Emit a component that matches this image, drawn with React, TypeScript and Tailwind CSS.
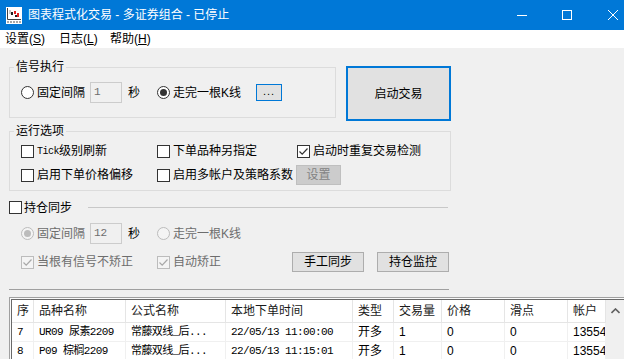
import React from "react";

const ui = "font-['Liberation_Sans','Noto_Sans_CJK_SC',sans-serif]";
const mono = "font-['Liberation_Mono','Noto_Sans_CJK_SC',monospace]";

function Radio({ checked = false, disabled = false }: { checked?: boolean; disabled?: boolean }) {
  return (
    <span
      className={
        disabled
          ? "w-[13px] h-[13px] shrink-0 rounded-full border border-[#bcbcbc] bg-[#f4f4f4] flex items-center justify-center"
          : "w-[13px] h-[13px] shrink-0 rounded-full border border-[#333333] bg-white flex items-center justify-center"
      }
    >
      {checked && (
        <span className={disabled ? "w-[7px] h-[7px] rounded-full bg-[#bcbcbc]" : "w-[7px] h-[7px] rounded-full bg-[#333333]"} />
      )}
    </span>
  );
}

function Check({ checked = false, disabled = false }: { checked?: boolean; disabled?: boolean }) {
  return (
    <span
      className={
        disabled
          ? "w-[13px] h-[13px] shrink-0 border border-[#bcbcbc] bg-[#f4f4f4] flex items-center justify-center"
          : "w-[13px] h-[13px] shrink-0 border border-[#333333] bg-white flex items-center justify-center"
      }
    >
      {checked && (
        <svg width="11" height="11" viewBox="0 0 11 11">
          <path d="M1.5 5.5 L4.2 8.2 L9.5 2.5" fill="none" stroke={disabled ? "#a8a8a8" : "#333333"} strokeWidth="1.2" />
        </svg>
      )}
    </span>
  );
}

function Btn({ children, className = "" }: { children: React.ReactNode; className?: string }) {
  return (
    <span className={`flex items-center justify-center bg-[#e1e1e1] border border-[#adadad] text-[12px] text-black ${className}`}>
      {children}
    </span>
  );
}

const headers = ["序", "品种名称", "公式名称", "本地下单时间", "类型", "交易量", "价格", "滑点", "帐户"];
const rows = [
  ["7", "UR09 尿素2209", "常藤双线_后...", "22/05/13 11:00:00", "开多", "1", "0", "0", "13554900"],
  ["8", "P09 棕榈2209", "常藤双线_后...", "22/05/13 11:15:01", "开多", "1", "0", "0", "13554900"],
];

function AppIcon() {
  return (
    <svg width="16" height="17" viewBox="0 0 16 17">
      <rect width="16" height="17" fill="#ffffff" />
      <path d="M1.5 1 V12.5 H15" fill="none" stroke="#404040" strokeWidth="1" />
      <path d="M3 4 H5 M3 6 H5" stroke="#9a9a9a" strokeWidth="1" />
      <rect x="5" y="5" width="2" height="3" fill="#202020" />
      <rect x="8" y="4" width="2" height="3" fill="#e02020" />
      <rect x="11" y="6" width="2" height="4" fill="#e02020" />
      <rect x="9" y="8" width="2" height="2" fill="#202020" />
      <path d="M1 15 H15" stroke="#8a8a8a" strokeWidth="1.5" strokeDasharray="2 1" />
    </svg>
  );
}

export default function App() {
  return (
    <div className={`w-[624px] h-[359px] overflow-hidden bg-[#f0f0f0] text-[12px] text-black ${ui}`}>
      {/* title bar */}
      <div className="h-[30px] bg-[#0078d7] flex items-center">
        <span className="ml-[6px]">
          <AppIcon />
        </span>
        <span className="ml-[6px] text-white text-[12px] leading-[14px]">图表程式化交易 - 多证券组合 - 已停止</span>
        <div className="ml-auto mr-[6px] flex items-center gap-[35px]">
          <svg width="10" height="10" viewBox="0 0 10 10">
            <path d="M0 5.5 H10" stroke="#ffffff" strokeWidth="1" />
          </svg>
          <svg width="10" height="10" viewBox="0 0 10 10">
            <rect x="0.5" y="0.5" width="9" height="9" fill="none" stroke="#ffffff" strokeWidth="1" />
          </svg>
          <svg width="10" height="10" viewBox="0 0 10 10" className="ml-px">
            <path d="M0 0 L10 10 M10 0 L0 10" stroke="#ffffff" strokeWidth="1" />
          </svg>
        </div>
      </div>

      {/* menu bar */}
      <div className="h-[18px] bg-white flex items-center pl-[5px] leading-[14px]">
        <span className="w-[54px]">设置(<u>S</u>)</span>
        <span className="w-[51px]">日志(<u>L</u>)</span>
        <span>帮助(<u>H</u>)</span>
      </div>

      <div className="px-[9px]">
        {/* signal group + start button */}
        <div className="flex items-start mt-[12px]">
          <fieldset className="w-[327px] border border-[#dcdcdc]">
            <legend className="ml-[4px] px-[2px] leading-[14px]">信号执行</legend>
            <div className="pl-[11px] mt-[8px] mb-[14px] h-[21px] flex items-center">
              <Radio />
              <span className="ml-[3px] w-[53px]">固定间隔</span>
              <span className={`w-[32px] h-[21px] border border-[#cccccc] bg-[#f0f0f0] text-[#6d6d6d] pl-[3px] text-[11px] leading-[19px] ${mono}`}>1</span>
              <span className="ml-[6px] w-[29px]">秒</span>
              <Radio checked />
              <span className="ml-[3px] w-[83px]">走完一根K线</span>
              <span className="w-[26px] h-[17px] border border-[#0078d7] bg-[#e1e1e1] flex items-center justify-center text-[11px] tracking-[1px] leading-none pb-[3px]">...</span>
            </div>
          </fieldset>
          <span className="ml-[10px] mt-[6px] w-[105px] h-[55px] border-2 border-[#0078d7] bg-[#e1e1e1] flex items-center justify-center">
            启动交易
          </span>
        </div>

        {/* options group */}
        <fieldset className="mt-[3px] w-[442px] border border-[#dcdcdc]">
          <legend className="ml-[4px] px-[2px] leading-[14px]">运行选项</legend>
          <div className="pl-[11px] pt-[6px] pb-[5px]">
            <div className="h-[14px] flex items-center">
              <span className="w-[136px] flex items-center">
                <Check />
                <span className={`ml-[3px] text-[10px] tracking-[-0.5px] ${mono}`}>Tick</span>
                <span>级别刷新</span>
              </span>
              <span className="w-[140px] flex items-center">
                <Check />
                <span className="ml-[3px]">下单品种另指定</span>
              </span>
              <span className="flex items-center">
                <Check checked />
                <span className="ml-[3px]">启动时重复交易检测</span>
              </span>
            </div>
            <div className="mt-[7px] h-[20px] flex items-center">
              <span className="w-[136px] flex items-center">
                <Check />
                <span className="ml-[3px]">启用下单价格偏移</span>
              </span>
              <span className="w-[139px] flex items-center">
                <Check />
                <span className="ml-[3px] whitespace-nowrap">启用多帐户及策略系数</span>
              </span>
              <span className="w-[45px] h-[20px] bg-[#cccccc] border border-[#bfbfbf] text-[#838383] flex items-center justify-center">
                设置
              </span>
            </div>
          </div>
        </fieldset>

        {/* position sync */}
        <div className="mt-[9px] h-[15px] flex items-center">
          <Check />
          <span className="ml-[2px] w-[48px]">持仓同步</span>
          <span className="ml-[16px] w-[360px] h-px bg-[#c8c8c8]" />
        </div>
        <div className="mt-[8px] h-[21px] pl-[12px] flex items-center text-[#6d6d6d]">
          <Radio checked disabled />
          <span className="ml-[3px] w-[53px]">固定间隔</span>
          <span className={`w-[32px] h-[21px] border border-[#cccccc] bg-[#f0f0f0] text-[#6d6d6d] pl-[3px] text-[11px] leading-[19px] ${mono}`}>12</span>
          <span className="ml-[6px] w-[29px] text-black">秒</span>
          <Radio disabled />
          <span className="ml-[3px]">走完一根K线</span>
        </div>
        <div className="mt-[8px] h-[20px] pl-[12px] flex items-center text-[#6d6d6d]">
          <span className="w-[136px] flex items-center">
            <Check checked disabled />
            <span className="ml-[3px]">当根有信号不矫正</span>
          </span>
          <span className="w-[135px] flex items-center">
            <Check checked disabled />
            <span className="ml-[3px]">自动矫正</span>
          </span>
          <Btn className="w-[72px] h-[20px]">手工同步</Btn>
          <Btn className="ml-[13px] w-[72px] h-[20px]">持仓监控</Btn>
        </div>

        <div className="mt-[17px] w-[440px] h-px bg-[#a0a0a0]" />
      </div>

      {/* order table */}
      <div className="mt-[7px] ml-[9px] border-l border-t border-[#a0a0a0] pl-px pt-px bg-[#fafafa]">
        <div className="border-l border-t border-[#696969] flex">
          <div className="grid grid-cols-[22px_92px_100px_127px_41px_48px_63px_63px_38px] bg-white">
            {headers.map((h) => (
              <div key={h} className="h-[23px] border-r border-b border-[#e5e5e5] flex items-center pl-[5px] whitespace-nowrap overflow-hidden text-[#1a1a1a]">
                {h}
              </div>
            ))}
            {rows.map((r) =>
              r.map((c, i) => (
                <div
                  key={r[0] + "-" + i}
                  className={
                    i < 4
                      ? `h-[19px] border-r border-b border-[#f0f0f0] flex items-center pl-[5px] whitespace-nowrap overflow-hidden text-[11px] tracking-[-0.6px] ${mono}`
                      : "h-[19px] border-r border-b border-[#f0f0f0] flex items-center pl-[5px] whitespace-nowrap overflow-hidden"
                  }
                >
                  {c}
                </div>
              ))
            )}
          </div>
          <div className="w-[18px] bg-[#f0f0f0] flex justify-center pt-[8px]">
            <svg width="9" height="6" viewBox="0 0 9 6">
              <path d="M0.5 5 L4.5 1 L8.5 5" fill="none" stroke="#606060" strokeWidth="1.6" />
            </svg>
          </div>
        </div>
      </div>
    </div>
  );
}
